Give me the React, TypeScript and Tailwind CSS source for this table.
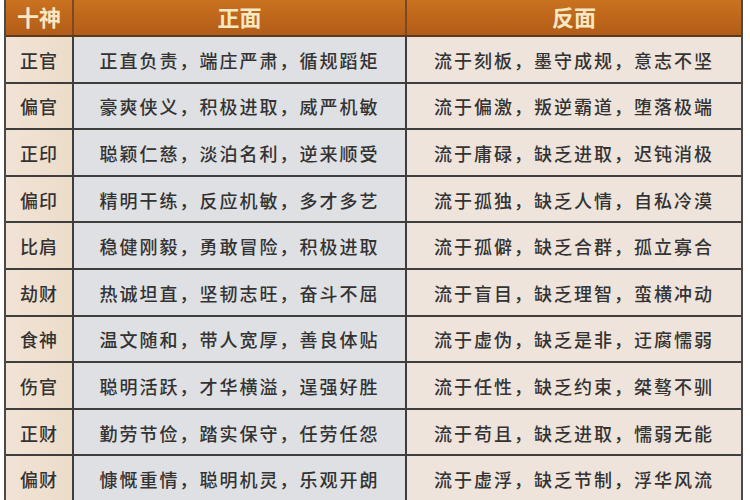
import React from 'react';

const rows: [string, string, string][] = [
  ['正官', '正直负责，端庄严肃，循规蹈矩', '流于刻板，墨守成规，意志不坚'],
  ['偏官', '豪爽侠义，积极进取，威严机敏', '流于偏激，叛逆霸道，堕落极端'],
  ['正印', '聪颖仁慈，淡泊名利，逆来顺受', '流于庸碌，缺乏进取，迟钝消极'],
  ['偏印', '精明干练，反应机敏，多才多艺', '流于孤独，缺乏人情，自私冷漠'],
  ['比肩', '稳健刚毅，勇敢冒险，积极进取', '流于孤僻，缺乏合群，孤立寡合'],
  ['劫财', '热诚坦直，坚韧志旺，奋斗不屈', '流于盲目，缺乏理智，蛮横冲动'],
  ['食神', '温文随和，带人宽厚，善良体贴', '流于虚伪，缺乏是非，迂腐懦弱'],
  ['伤官', '聪明活跃，才华横溢，逞强好胜', '流于任性，缺乏约束，桀骜不驯'],
  ['正财', '勤劳节俭，踏实保守，任劳任怨', '流于苟且，缺乏进取，懦弱无能'],
  ['偏财', '慷慨重情，聪明机灵，乐观开朗', '流于虚浮，缺乏节制，浮华风流'],
];

const font = { fontFamily: '"Noto Sans CJK SC", "Noto Sans", sans-serif' };

export default function App() {
  return (
    <div className="w-[750px] h-[500px] overflow-hidden bg-white" style={font}>
      <div className="ml-[4px] w-[739px] border-x-2 border-[#4a4a4a]">
        {/* header */}
        <div className="grid grid-cols-[66px_2px_331px_2px_334px] h-[37px] bg-gradient-to-b from-[#c9721f] to-[#b35c18] border-b-2 border-[#5c3a1c] text-[#f6e8c4] text-[22px] font-bold leading-none">
          <div className="flex items-start justify-center pt-[5px]">十神</div>
          <div className="bg-[#7a4a1e]" />
          <div className="flex items-start justify-center pt-[5px]">正面</div>
          <div className="bg-[#7a4a1e]" />
          <div className="flex items-start justify-center pt-[5px]">反面</div>
        </div>
        {rows.map(([god, pos, neg]) => (
          <div
            key={god}
            className="grid grid-cols-[66px_2px_331px_2px_334px] h-[46.6px] border-b-2 border-[#3e3e3e] text-[18px] text-[#333333] font-medium"
          >
            <div className="flex items-center justify-center pt-[2px] tracking-[1px] bg-gradient-to-r from-[#f1e3d6] to-[#ecdcc9]">{god}</div>
            <div className="bg-[#3e3e3e]" />
            <div className="flex items-center justify-center pt-[2px] tracking-[2px] bg-[#dfe0e3]">{pos}</div>
            <div className="bg-[#3e3e3e]" />
            <div className="flex items-center justify-center pt-[2px] tracking-[2px] bg-[#efe4dc]">{neg}</div>
          </div>
        ))}
      </div>
    </div>
  );
}
